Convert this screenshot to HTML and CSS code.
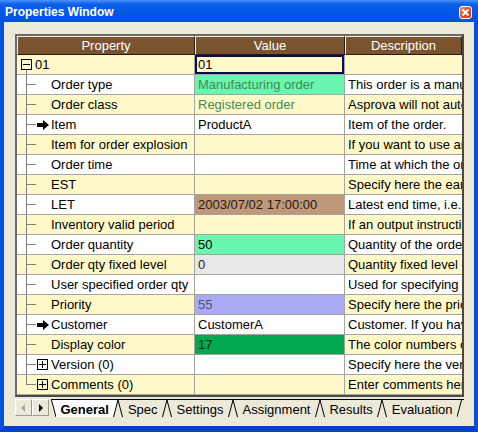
FILE: index.html
```html
<!DOCTYPE html>
<html lang="en">
<head>
    <meta charset="UTF-8">
    <title>Properties Window</title>
    <link rel="stylesheet" href="styles.css">
</head>
<body>

<div class="window">
    <div class="titlebar">
        <span class="title">Properties Window</span>
        <span class="close">
            <svg width="11" height="11" viewBox="0 0 11 11"><path d="M2.5 2.5 L8.5 8.5 M8.5 2.5 L2.5 8.5" stroke="#fff" stroke-width="1.8"/></svg>
        </span>
    </div>

    <div class="frame">
        <div class="grid">
            <div class="row head">
                <div class="cell">Property</div>
                <div class="cell">Value</div>
                <div class="cell">Description</div>
            </div>

            <div class="row">
                <div class="cell prop root">
                    <svg class="box" width="11" height="11" viewBox="0 0 11 11"><rect x="0.5" y="0.5" width="10" height="10" fill="none" stroke="#000"/><path d="M2 5.5 H9" stroke="#000"/></svg>
                    <span>01</span>
                </div>
                <div class="cell val focus">01</div>
                <div class="cell desc"></div>
            </div>

            <div class="row alt">
                <div class="cell prop"><span class="branch"></span><span class="mark"></span>Order type</div>
                <div class="cell val mint green">Manufacturing order</div>
                <div class="cell desc">This order is a manufacturing order.</div>
            </div>
            <div class="row">
                <div class="cell prop"><span class="branch"></span><span class="mark"></span>Order class</div>
                <div class="cell val green">Registered order</div>
                <div class="cell desc">Asprova will not automatically delete this order.</div>
            </div>
            <div class="row alt">
                <div class="cell prop"><span class="branch"></span><span class="mark"><svg width="13" height="10" viewBox="0 0 13 10"><path d="M0 3 H6 V0 L12 5 L6 10 V7 H0 Z" fill="#000"/></svg></span>Item</div>
                <div class="cell val">ProductA</div>
                <div class="cell desc">Item of the order.</div>
            </div>
            <div class="row">
                <div class="cell prop"><span class="branch"></span><span class="mark"></span>Item for order explosion</div>
                <div class="cell val"></div>
                <div class="cell desc">If you want to use another item for explosion</div>
            </div>
            <div class="row alt">
                <div class="cell prop"><span class="branch"></span><span class="mark"></span>Order time</div>
                <div class="cell val"></div>
                <div class="cell desc">Time at which the order was received.</div>
            </div>
            <div class="row">
                <div class="cell prop"><span class="branch"></span><span class="mark"></span>EST</div>
                <div class="cell val"></div>
                <div class="cell desc">Specify here the earliest start time.</div>
            </div>
            <div class="row alt">
                <div class="cell prop"><span class="branch"></span><span class="mark"></span>LET</div>
                <div class="cell val tan">2003/07/02 17:00:00</div>
                <div class="cell desc">Latest end time, i.e. the due date.</div>
            </div>
            <div class="row">
                <div class="cell prop"><span class="branch"></span><span class="mark"></span>Inventory valid period</div>
                <div class="cell val"></div>
                <div class="cell desc">If an output instruction is not consumed</div>
            </div>
            <div class="row alt">
                <div class="cell prop"><span class="branch"></span><span class="mark"></span>Order quantity</div>
                <div class="cell val mint">50</div>
                <div class="cell desc">Quantity of the order.</div>
            </div>
            <div class="row">
                <div class="cell prop"><span class="branch"></span><span class="mark"></span>Order qty fixed level</div>
                <div class="cell val grey">0</div>
                <div class="cell desc">Quantity fixed level of the order.</div>
            </div>
            <div class="row alt">
                <div class="cell prop"><span class="branch"></span><span class="mark"></span>User specified order qty</div>
                <div class="cell val"></div>
                <div class="cell desc">Used for specifying the order quantity.</div>
            </div>
            <div class="row">
                <div class="cell prop"><span class="branch"></span><span class="mark"></span>Priority</div>
                <div class="cell val lavender">55</div>
                <div class="cell desc">Specify here the priority of the order.</div>
            </div>
            <div class="row alt">
                <div class="cell prop"><span class="branch"></span><span class="mark"><svg width="13" height="10" viewBox="0 0 13 10"><path d="M0 3 H6 V0 L12 5 L6 10 V7 H0 Z" fill="#000"/></svg></span>Customer</div>
                <div class="cell val">CustomerA</div>
                <div class="cell desc">Customer. If you have a customer table</div>
            </div>
            <div class="row">
                <div class="cell prop"><span class="branch"></span><span class="mark"></span>Display color</div>
                <div class="cell val dgreen">17</div>
                <div class="cell desc">The color numbers of the order.</div>
            </div>
            <div class="row alt">
                <div class="cell prop"><span class="branch"></span><span class="mark"><svg width="11" height="11" viewBox="0 0 11 11"><rect x="0.5" y="0.5" width="10" height="10" fill="none" stroke="#000"/><path d="M2 5.5 H9 M5.5 2 V9" stroke="#000"/></svg></span>Version (0)</div>
                <div class="cell val"></div>
                <div class="cell desc">Specify here the version of the order.</div>
            </div>
            <div class="row">
                <div class="cell prop"><span class="branch last"></span><span class="mark"><svg width="11" height="11" viewBox="0 0 11 11"><rect x="0.5" y="0.5" width="10" height="10" fill="none" stroke="#000"/><path d="M2 5.5 H9 M5.5 2 V9" stroke="#000"/></svg></span>Comments (0)</div>
                <div class="cell val"></div>
                <div class="cell desc">Enter comments here.</div>
            </div>
        </div>

        <div class="tabbar">
            <span class="scroll"><svg width="5" height="8" viewBox="0 0 5 8"><path d="M4 0 V8 L0 4 Z" fill="#a8a8a8"/></svg></span>
            <span class="scroll"><svg width="5" height="8" viewBox="0 0 5 8"><path d="M1 0 V8 L5 4 Z" fill="#000"/></svg></span>
            <div class="tabs">
                <svg class="edge" width="5" height="17" viewBox="0 0 5 17"><path d="M0 0 H5 V17 Z" fill="#fff"/><path d="M0.5 0 L5 17" stroke="#000" fill="none"/></svg>
                <span class="tab active">General</span>
                <svg class="sep" width="10" height="17" viewBox="0 0 10 17"><path d="M0 0 H5 L0 17 Z" fill="#fff"/><path d="M0.5 17 L5 0 L9.5 17" stroke="#000" fill="none"/></svg>
                <span class="tab">Spec</span>
                <svg class="sep" width="10" height="17" viewBox="0 0 10 17"><path d="M0.5 17 L5 0 L9.5 17" stroke="#000" fill="none"/></svg>
                <span class="tab">Settings</span>
                <svg class="sep" width="10" height="17" viewBox="0 0 10 17"><path d="M0.5 17 L5 0 L9.5 17" stroke="#000" fill="none"/></svg>
                <span class="tab">Assignment</span>
                <svg class="sep" width="10" height="17" viewBox="0 0 10 17"><path d="M0.5 17 L5 0 L9.5 17" stroke="#000" fill="none"/></svg>
                <span class="tab">Results</span>
                <svg class="sep" width="10" height="17" viewBox="0 0 10 17"><path d="M0.5 17 L5 0 L9.5 17" stroke="#000" fill="none"/></svg>
                <span class="tab">Evaluation</span>
                <svg class="edge" width="5" height="17" viewBox="0 0 5 17"><path d="M0 17 L4.5 0" stroke="#000" fill="none"/></svg>
            </div>
        </div>
    </div>
</div>

</body>
</html>
```

FILE: styles.css
```css
* {
    margin: 0;
    padding: 0;
    box-sizing: border-box;
}

body {
    width: 478px;
    height: 432px;
    overflow: hidden;
    font-family: "Liberation Sans", Arial, sans-serif;
    font-size: 13px;
    color: #000;
}

.window {
    width: 478px;
    height: 432px;
    display: flex;
    flex-direction: column;
}

.titlebar {
    height: 22px;
    display: flex;
    align-items: center;
    justify-content: space-between;
    padding: 0 6px 0 5px;
    background: linear-gradient(#4a95f8 0, #0d60ea 4px, #0458e6 55%, #0251de 100%);
}

.title {
    color: #fff;
    font-size: 12px;
    font-weight: bold;
    padding-top: 1px;
}

.close {
    width: 13px;
    height: 13px;
    margin-top: 2px;
    border: 1px solid #fff;
    border-radius: 3px;
    background: linear-gradient(135deg, #ec8a6a, #e0522e 50%, #c83c1c);
    display: flex;
    align-items: center;
    justify-content: center;
}

.frame {
    flex: 1;
    display: flex;
    flex-direction: column;
    background: #ece9d8;
    border-left: 4px solid #0652e0;
    border-right: 4px solid #0550dc;
    border-bottom: 6px solid #083fd2;
    padding: 12px 10px 9px 11px;
}

/* property grid */
.grid {
    width: 449px;
    height: 363px;
    border: 2px solid #4a4a4a;
    border-top-color: #6a6a6a;
    border-left-color: #6a6a6a;
    overflow: hidden;
}

.row {
    display: grid;
    grid-template-columns: 178px 150px 117px;
    background: #fff9c9;
}

.row.alt {
    background: #fff;
}

.cell {
    height: 20px;
    line-height: 19px;
    border-bottom: 1px solid #a4a4a4;
    border-right: 1px solid #a4a4a4;
    white-space: nowrap;
    overflow: hidden;
}

.cell.desc {
    border-right: none;
    padding-left: 3px;
}

.head .cell {
    height: 19px;
    line-height: 17px;
    background: #7a532f;
    color: #fff;
    text-align: center;
    border-top: 1px solid #f4ece0;
    border-left: 1px solid #f4ece0;
    border-right: 1px solid #1e1e1e;
    border-bottom: 1px solid #1e1e1e;
}

.prop {
    display: flex;
    align-items: center;
}

.prop.root {
    padding-left: 4px;
    gap: 3px;
    background: linear-gradient(#808080, #808080) no-repeat 9px 15px / 1px 4px;
}

.branch {
    align-self: stretch;
    width: 10px;
    margin-left: 9px;
    background:
        linear-gradient(#808080, #808080) no-repeat 0 0 / 1px 100%,
        linear-gradient(#808080, #808080) no-repeat 0 9px / 10px 1px;
}

.branch.last {
    background:
        linear-gradient(#808080, #808080) no-repeat 0 0 / 1px 10px,
        linear-gradient(#808080, #808080) no-repeat 0 9px / 10px 1px;
}

.mark {
    width: 15px;
    height: 19px;
    display: flex;
    align-items: center;
    padding-left: 1px;
}

.val {
    padding-left: 3px;
}

.val.focus {
    box-shadow: inset 0 0 0 2px #0c0c4e;
    height: 20px;
}

.mint { background: #68f6b0; }
.green { color: #458a50; }
.tan { background: #bf9879; color: #2a1a0c; }
.grey { background: #e8e8e8; color: #222; }
.lavender { background: #aaaaf4; color: #505070; }
.dgreen { background: #00a84f; color: #0b2a14; }

/* sheet tabs */
.tabbar {
    margin-top: 2px;
    height: 18px;
    display: flex;
}

.scroll {
    width: 17px;
    height: 17px;
    display: flex;
    align-items: center;
    justify-content: center;
    background: #ece9d8;
    border: 1px solid;
    border-color: #fff #9d9a8c #9d9a8c #fff;
}

.tabs {
    flex: 1;
    display: flex;
    margin-left: 2px;
    border-top: 1px solid #000;
    height: 18px;
}

.tab {
    height: 17px;
    line-height: 17px;
    padding: 1px 4.5px 0;
}

.tab.active {
    background: #fff;
    font-weight: bold;
}

.edge, .sep {
    flex-shrink: 0;
}
```
